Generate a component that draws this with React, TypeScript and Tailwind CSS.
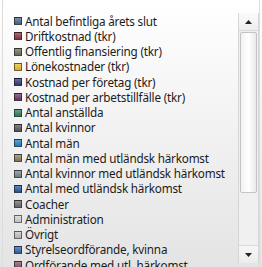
import React from "react";

type Item = { label: string; color: string };

const items: Item[] = [
  { label: "Antal befintliga årets slut", color: "#4d6a8c" },
  { label: "Driftkostnad (tkr)", color: "#8c3a48" },
  { label: "Offentlig finansiering (tkr)", color: "#6c7660" },
  { label: "Lönekostnader (tkr)", color: "#e8c030" },
  { label: "Kostnad per företag (tkr)", color: "#3c3c78" },
  { label: "Kostnad per arbetstillfälle (tkr)", color: "#6a3a68" },
  { label: "Antal anställda", color: "#3a8060" },
  { label: "Antal kvinnor", color: "#5c5c5c" },
  { label: "Antal män", color: "#2a84c4" },
  { label: "Antal män med utländsk härkomst", color: "#8c8262" },
  { label: "Antal kvinnor med utländsk härkomst", color: "#788a8c" },
  { label: "Antal med utländsk härkomst", color: "#2c5c9c" },
  { label: "Coacher", color: "#707070" },
  { label: "Administration", color: "#d4d4d4" },
  { label: "Övrigt", color: "#c4c4c4" },
  { label: "Styrelseordförande, kvinna", color: "#3a6aa4" },
  { label: "Ordförande med utl. härkomst", color: "#8a5868" },
];

const ScrollBar: React.FC = () => (
  <div className="flex h-[250px] w-[21px] shrink-0 flex-col border-l border-r border-[#d6d6d6] bg-[#f0f0f0]">
    <div className="flex h-[18px] items-center justify-center border-b border-[#dadada] bg-gradient-to-b from-[#fbfbfb] to-[#eeeeee]">
      <svg width="7" height="4" viewBox="0 0 7 4">
        <path d="M0 4 L3.5 0 L7 4 Z" fill="#222" />
      </svg>
    </div>
    <div className="mx-[1px] mt-[1px] h-[161px] rounded-[2px] border border-[#c4c4c4] bg-gradient-to-r from-[#f2f2f2] via-white to-[#eaeaea]" />
    <div className="flex-1" />
    <div className="flex h-[18px] items-center justify-center border-t border-[#dadada] bg-gradient-to-b from-[#f6f6f6] to-[#ececec]">
      <svg width="7" height="4" viewBox="0 0 7 4">
        <path d="M0 0 L7 0 L3.5 4 Z" fill="#222" />
      </svg>
    </div>
  </div>
);

export default function App() {
  return (
    <div
      className="h-[267px] w-[262px] overflow-hidden bg-gradient-to-b from-white to-[#e4e4e4]"
      style={{ fontFamily: '"Noto Sans", "Open Sans", sans-serif' }}
    >
      <div className="ml-[2px] flex h-full w-[258px] border-l border-r border-[#dcdcdc] pt-[13px]">
        <ul className="flex-1 pl-[11px] pt-[0.4px]">
          {items.map((it) => (
            <li
              key={it.label}
              className="flex h-[15.25px] items-center whitespace-nowrap text-[11.7px] leading-[15px] tracking-[-0.2px] text-[#1c1c1c]"
            >
              <span
                className="mr-[3px] h-[8px] w-[8px] shrink-0 border border-black/50"
                style={{
                  backgroundColor: it.color,
                  backgroundImage:
                    "linear-gradient(to bottom, rgba(255,255,255,0.25), rgba(0,0,0,0.1))",
                }}
              />
              <span>{it.label}</span>
            </li>
          ))}
        </ul>
        <ScrollBar />
      </div>
    </div>
  );
}
